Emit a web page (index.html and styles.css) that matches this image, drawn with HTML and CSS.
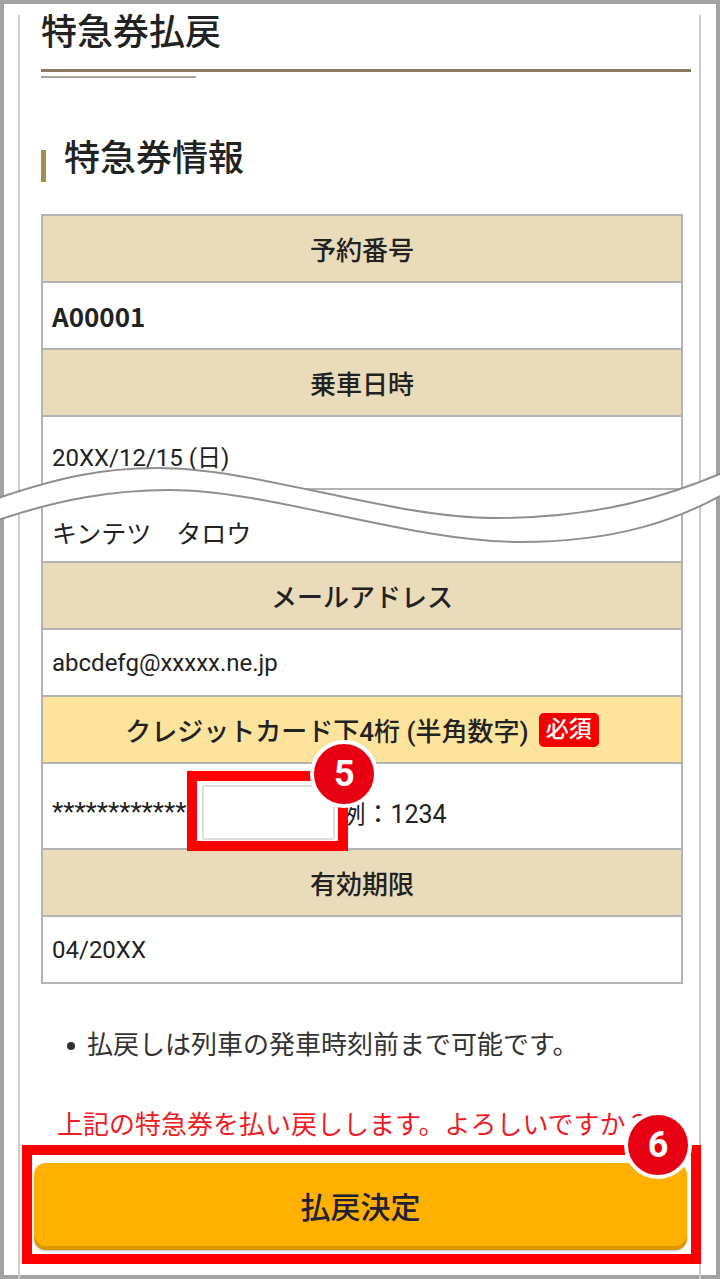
FILE: index.html
```html
<!DOCTYPE html>
<html lang="ja">
<head>
<meta charset="utf-8">
<title>特急券払戻</title>
<link rel="stylesheet" href="styles.css">
</head>
<body>
<div class="frame">
  <div class="screen">
    <h1 class="title">特急券払戻</h1>
    <div class="rule"><div class="rule-thick"></div><div class="rule-thin"></div></div>
    <h2 class="heading">特急券情報</h2>
    <div class="info">
      <div class="row head">予約番号</div>
      <div class="row val strong">A00001</div>
      <div class="row head">乗車日時</div>
      <div class="row val cut-above">20XX/12/15 (日)</div>
      <div class="row val cut-below">キンテツ　タロウ</div>
      <div class="row head">メールアドレス</div>
      <div class="row val">abcdefg@xxxxx.ne.jp</div>
      <div class="row head required">クレジットカード下4桁 (半角数字)<span class="badge-req">必須</span></div>
      <div class="row val card">
        <span class="stars">************</span>
        <span class="field">
          <input class="input" type="text" aria-label="クレジットカード下4桁">
          <span class="mark"></span>
          <span class="step step-5">5</span>
        </span>
        <span class="example">例：1234</span>
      </div>
      <div class="row head">有効期限</div>
      <div class="row val">04/20XX</div>
    </div>
    <p class="note"><span class="dot"></span>払戻しは列車の発車時刻前まで可能です。</p>
    <p class="confirm">上記の特急券を払い戻しします。よろしいですか？</p>
    <div class="action">
      <button class="submit" type="button">払戻決定</button>
      <span class="step step-6">6</span>
    </div>
  </div>
  <svg class="wave" width="720" height="120" viewBox="0 0 720 120">
    <path d="M-2,58 C58,38 100,28 158,28 C258,28 390,78 495,78 C600,78 670,55 722,33 L722,55 C680,78 620,102 520,102 C410,102 270,50 170,50 C110,50 58,60 -2,80 Z" fill="#fff"/>
    <path d="M-2,58 C58,38 100,28 158,28 C258,28 390,78 495,78 C600,78 670,55 722,33" fill="none" stroke="#8f8f8f" stroke-width="2"/>
    <path d="M-2,80 C58,60 110,50 170,50 C270,50 410,102 520,102 C620,102 680,78 722,55" fill="none" stroke="#8f8f8f" stroke-width="2"/>
  </svg>
</div>
</body>
</html>
```
FILE: styles.css
```css
body {
  margin: 0;
  background: #fff;
}

.frame {
  position: relative;
  width: 720px;
  height: 1279px;
  box-sizing: border-box;
  border: 4px solid #a3a3a3;
  padding: 0 15px 0 14px;
  background: #fff;
}

.screen {
  height: 100%;
  box-sizing: border-box;
  border-left: 2px solid #cdcdcd;
  border-right: 2px solid #cdcdcd;
  padding: 0 16px 0 21px;
  font-family: Roboto, "Noto Sans CJK JP", sans-serif;
  color: #222;
}

.title {
  margin: 11px 0 0;
  font-size: 36px;
  line-height: 36px;
  font-weight: 500;
}

.rule {
  margin: 18px -8px 0 0;
}

.rule-thick {
  height: 3px;
  background: #877c62;
}

.rule-thin {
  width: 155px;
  height: 2px;
  margin-top: 4px;
  background: #aaa397;
}

.heading {
  display: flex;
  align-items: flex-start;
  margin: 63px 0 0;
  font-size: 36px;
  line-height: 36px;
  font-weight: 500;
}

.heading::before {
  content: "";
  width: 5px;
  height: 32px;
  margin: 9px 18px 0 0;
  background: #a38d4f;
}

.info {
  margin-top: 32px;
  border: 2px solid #b3b3b3;
  border-bottom: none;
}

.row {
  height: 67px;
  box-sizing: border-box;
  border-bottom: 2px solid #b3b3b3;
  display: flex;
  align-items: center;
}

.head {
  justify-content: center;
  background: #eadcba;
  font-size: 26px;
  font-weight: 500;
  color: #222;
}

.head.required {
  background: #fde39b;
}

.badge-req {
  margin-left: 10px;
  padding: 0 7px;
  height: 34px;
  line-height: 34px;
  border-radius: 5px;
  background: #f50000;
  color: #fff;
  font-size: 23px;
  font-weight: 500;
}

.val {
  padding-left: 9px;
  background: #fff;
  font-size: 24px;
  color: #222;
}

.val.strong {
  font-family: "Noto Sans CJK JP", sans-serif;
  font-weight: 700;
  font-size: 26px;
}

.cut-above {
  height: 73px;
  padding-top: 6px;
}

.cut-below {
  height: 73px;
  padding-top: 12px;
  font-size: 25px;
}

.card {
  height: 86px;
  padding-top: 12px;
}

.stars {
  font-size: 26px;
}

.field {
  position: relative;
  display: block;
  margin-left: 16px;
}

.input {
  display: block;
  width: 133px;
  height: 55px;
  box-sizing: border-box;
  margin: 0;
  border: 2px solid #dedede;
  border-radius: 3px;
  background: #fff;
}

.mark {
  position: absolute;
  left: -15px;
  top: -14px;
  right: -13px;
  bottom: -11px;
  border: 10px solid #ff0000;
}

.step {
  position: absolute;
  width: 68px;
  height: 68px;
  box-sizing: border-box;
  border: 4px solid #fff;
  border-radius: 50%;
  background: #e60012;
  color: #fff;
  font-family: Roboto, "Liberation Sans", sans-serif;
  font-weight: 700;
  font-size: 36px;
  display: flex;
  align-items: center;
  justify-content: center;
}

.step-5 {
  left: 108px;
  top: -45px;
}

.example {
  margin-left: 5px;
  font-size: 25px;
}

.note {
  display: flex;
  align-items: center;
  margin: 43px 0 0;
  padding-left: 26px;
  font-size: 26px;
  line-height: 36px;
  color: #333;
}

.dot {
  width: 8px;
  height: 8px;
  border-radius: 50%;
  background: #333;
  margin: 2px 12px 0 0;
  flex: none;
}

.confirm {
  margin: 44px 0 0;
  padding-left: 16px;
  font-size: 26px;
  line-height: 36px;
  color: #ee1c25;
  white-space: nowrap;
}

.action {
  position: relative;
  margin: 2px -18px 0 -19px;
  border: 10px solid #ff0000;
  padding: 8px 4px 4px 2px;
}

.submit {
  display: flex;
  align-items: center;
  justify-content: center;
  width: 100%;
  height: 87px;
  margin: 0;
  padding: 0 0 4px;
  border: none;
  border-radius: 12px;
  background: #ffb000;
  box-shadow: inset 0 -4px 0 #dc9600, 0 1px 2px rgba(0, 0, 0, 0.25);
  font-family: Roboto, "Noto Sans CJK JP", sans-serif;
  font-size: 30px;
  font-weight: 500;
  color: #1f2236;
}

.step-6 {
  width: 68px;
  height: 68px;
  left: 592px;
  top: -44px;
}

.wave {
  position: absolute;
  left: -4px;
  top: 436px;
}
```
